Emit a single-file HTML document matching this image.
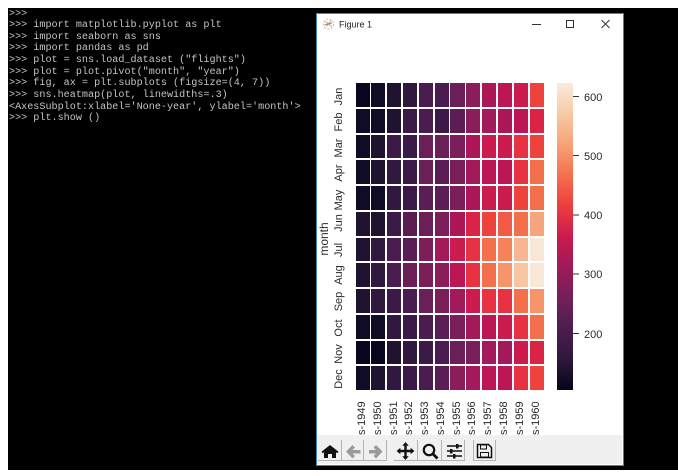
<!DOCTYPE html>
<html><head><meta charset="utf-8"><style>
html,body{margin:0;padding:0;background:#fff}
#root{position:relative;width:678px;height:476px;overflow:hidden;background:#fff;filter:blur(.3px)}
#term{position:absolute;left:8px;top:8px;width:670px;height:462px;background:#000;overflow:hidden}
pre{position:absolute;left:1px;top:.5px;margin:0;font:10.15px/11.65px "Liberation Mono",monospace;color:#c4c4c4}
#win{position:absolute;left:316px;top:13px;width:306px;height:451px;border:1px solid #3f86b8;background:#fff;overflow:hidden}
#hm{position:absolute;left:355.5px;top:83px;width:190px;height:309px;display:grid;grid-template-columns:repeat(12,1fr);grid-template-rows:repeat(12,1fr)}
#hm i{display:block;margin:0 1.7px 2px 0}
.a{background:#08061e}.b{background:#110c26}.c{background:#201332}.d{background:#30183e}.e{background:#3c1a47}.f{background:#4b1c50}.g{background:#5a1e55}.h{background:#6a1f59}.i{background:#7a1f5a}.j{background:#8a1d5a}.k{background:#a21a5a}.l{background:#ac1857}.m{background:#bd1654}.n{background:#cb1b4f}.o{background:#db2346}.p{background:#e73243}.q{background:#ee433d}.r{background:#f15a46}.s{background:#f4704c}.t{background:#f5825a}.u{background:#f6946b}.v{background:#f6a57d}.w{background:#f7b68f}.x{background:#f8c6a2}.y{background:#f9d6bb}.z{background:#f9e8d8}
#cb{position:absolute;left:557px;top:83px;width:16px;height:307px;background:linear-gradient(to top,#03051a 0%,#2e173b 10%,#4c1d50 20%,#731f5a 30%,#9e1a58 40%,#cb1b4f 50%,#ed3d3e 60%,#f4714d 70%,#f6a278 80%,#f8c9a5 90%,#faebdd 100%)}
svg{position:absolute;left:0;top:0}
text{font-family:"Liberation Sans",sans-serif;fill:#2a2a2a}
</style></head><body><div id="root">
<div id="term"><pre>&gt;&gt;&gt;
&gt;&gt;&gt; import matplotlib.pyplot as plt
&gt;&gt;&gt; import seaborn as sns
&gt;&gt;&gt; import pandas as pd
&gt;&gt;&gt; plot = sns.load_dataset ("flights")
&gt;&gt;&gt; plot = plot.pivot("month", "year")
&gt;&gt;&gt; fig, ax = plt.subplots (figsize=(4, 7))
&gt;&gt;&gt; sns.heatmap(plot, linewidths=.3)
&lt;AxesSubplot:xlabel='None-year', ylabel='month'&gt;
&gt;&gt;&gt; plt.show ()</pre></div>
<div id="win"></div>
<div id="hm">
<i class=a></i><i class=b></i><i class=c></i><i class=d></i><i class=f></i><i class=f></i><i class=h></i><i class=j></i><i class=l></i><i class=m></i><i class=n></i><i class=q></i>
<i class=b></i><i class=b></i><i class=c></i><i class=e></i><i class=f></i><i class=e></i><i class=g></i><i class=j></i><i class=k></i><i class=l></i><i class=m></i><i class=o></i>
<i class=b></i><i class=c></i><i class=e></i><i class=e></i><i class=h></i><i class=h></i><i class=i></i><i class=l></i><i class=n></i><i class=n></i><i class=p></i><i class=q></i>
<i class=b></i><i class=c></i><i class=d></i><i class=e></i><i class=h></i><i class=g></i><i class=i></i><i class=k></i><i class=m></i><i class=m></i><i class=p></i><i class=s></i>
<i class=b></i><i class=b></i><i class=d></i><i class=e></i><i class=g></i><i class=g></i><i class=i></i><i class=l></i><i class=n></i><i class=n></i><i class=q></i><i class=s></i>
<i class=c></i><i class=c></i><i class=e></i><i class=g></i><i class=h></i><i class=i></i><i class=l></i><i class=o></i><i class=q></i><i class=r></i><i class=s></i><i class=v></i>
<i class=c></i><i class=d></i><i class=f></i><i class=g></i><i class=i></i><i class=k></i><i class=n></i><i class=p></i><i class=s></i><i class=t></i><i class=w></i><i class=z></i>
<i class=c></i><i class=d></i><i class=f></i><i class=h></i><i class=i></i><i class=j></i><i class=m></i><i class=p></i><i class=s></i><i class=u></i><i class=x></i><i class=z></i>
<i class=c></i><i class=d></i><i class=e></i><i class=f></i><i class=h></i><i class=i></i><i class=k></i><i class=n></i><i class=p></i><i class=p></i><i class=s></i><i class=u></i>
<i class=b></i><i class=b></i><i class=d></i><i class=e></i><i class=f></i><i class=g></i><i class=i></i><i class=k></i><i class=m></i><i class=n></i><i class=p></i><i class=s></i>
<i class=a></i><i class=a></i><i class=c></i><i class=d></i><i class=e></i><i class=f></i><i class=h></i><i class=i></i><i class=k></i><i class=k></i><i class=n></i><i class=o></i>
<i class=b></i><i class=c></i><i class=d></i><i class=e></i><i class=f></i><i class=g></i><i class=j></i><i class=k></i><i class=m></i><i class=m></i><i class=p></i><i class=q></i>
</div>
<div id="cb"></div>
<svg width="678" height="476" viewBox="0 0 678 476">
<!-- title bar -->
<g fill="none" stroke-width="1">
<circle cx="328.500" cy="24" r="5" stroke="#b9b9c8" stroke-dasharray="2 1.500"/>
<path d="M325.500 21.500l6 5M331 20.500l-4.500 6" stroke="#c9a070"/>
<path d="M324.500 25l7.500-2" stroke="#8a8a9a"/>
</g>
<text x="339" y="27.500" font-size="9" style="fill:#222">Figure 1</text>
<path d="M532 24.500h9" stroke="#333" stroke-width="1" fill="none"/>
<rect x="566.500" y="20.500" width="7" height="7" stroke="#333" fill="none"/>
<path d="M601.500 20l8 8M609.500 20l-8 8" stroke="#333" fill="none"/>
<!-- y labels -->
<g font-size="11" text-anchor="middle">
<text transform="translate(342,96.500) rotate(-90)">Jan</text>
<text transform="translate(342,122) rotate(-90)">Feb</text>
<text transform="translate(342,148) rotate(-90)">Mar</text>
<text transform="translate(342,173) rotate(-90)">Apr</text>
<text transform="translate(342,200) rotate(-90)">May</text>
<text transform="translate(342,223) rotate(-90)">Jun</text>
<text transform="translate(342,250) rotate(-90)">Jul</text>
<text transform="translate(342,275) rotate(-90)">Aug</text>
<text transform="translate(342,301.500) rotate(-90)">Sep</text>
<text transform="translate(342,328) rotate(-90)">Oct</text>
<text transform="translate(342,354) rotate(-90)">Nov</text>
<text transform="translate(342,379) rotate(-90)">Dec</text>
</g>
<text transform="translate(328,239) rotate(-90)" font-size="12" text-anchor="middle">month</text>
<!-- x labels -->
<g font-size="11" text-anchor="start">
<text transform="translate(365,435) rotate(-90)">s-1949</text>
<text transform="translate(381,435) rotate(-90)">s-1950</text>
<text transform="translate(397,435) rotate(-90)">s-1951</text>
<text transform="translate(412,435) rotate(-90)">s-1952</text>
<text transform="translate(428,435) rotate(-90)">s-1953</text>
<text transform="translate(444,435) rotate(-90)">s-1954</text>
<text transform="translate(460,435) rotate(-90)">s-1955</text>
<text transform="translate(475,435) rotate(-90)">s-1956</text>
<text transform="translate(491,435) rotate(-90)">s-1957</text>
<text transform="translate(507,435) rotate(-90)">s-1958</text>
<text transform="translate(523,435) rotate(-90)">s-1959</text>
<text transform="translate(539,435) rotate(-90)">s-1960</text>
</g>
<!-- colorbar ticks -->
<g stroke="#333" stroke-width="1"><path d="M573 96.500h6M573 155.500h6M573 215h6M573 274h6M573 333.500h6"/></g>
<g font-size="11">
<text x="584" y="101">600</text><text x="584" y="160">500</text><text x="584" y="219">400</text><text x="584" y="278">300</text><text x="584" y="338">200</text>
</g>
<!-- toolbar -->
<rect x="317" y="435" width="305" height="29" fill="#f0f0f0"/>
<g fill="none" stroke="#b4b4b4" stroke-width="1">
<path d="M318 460.500h69M341.500 440v21M363.500 440v21M386.500 440v21"/>
<path d="M394 460.500h70M417.500 440v21M441.500 440v21M464.500 440v21"/>
<path d="M473.500 440v21M473 460.500h23M495.500 440v21"/>
</g>
<!-- home -->
<path d="M330 445l-8.500 6.800 1.200 1.400 1.300-1v5.800h4v-4h4v4h4v-5.800l1.300 1 1.200-1.400z" fill="#111"/>
<!-- back -->
<path d="M346 451.500l6.500-6.500 2.500 2.500-2.500 2.500h8v3.500h-8l2.500 2.500-2.500 2.500z" fill="#9a9a9a"/>
<!-- forward -->
<path d="M382.500 451.500l-6.500-6.500-2.500 2.500 2.500 2.500h-7v3.500h7l-2.500 2.500 2.500 2.500z" fill="#9a9a9a"/>
<!-- move -->
<path d="M405.500 442l3.200 3.800h-2v3.900h3.900v-2l3.800 3.300-3.800 3.300v-2h-3.900v3.900h2l-3.200 3.800-3.200-3.800h2v-3.900h-3.900v2l-3.800-3.300 3.800-3.300v2h3.900v-3.900h-2z" fill="#111"/>
<!-- zoom -->
<circle cx="429" cy="450" r="5.200" fill="none" stroke="#111" stroke-width="2.200"/>
<path d="M433 454l4.500 4.500" stroke="#111" stroke-width="2.800" fill="none"/>
<!-- sliders -->
<g stroke="#111" stroke-width="1.500" fill="none"><path d="M447 446h15M447 451h15M447 456h15"/></g>
<g fill="#111"><rect x="456" y="444" width="2.500" height="4.500"/><rect x="450" y="449" width="2.500" height="4.500"/><rect x="453" y="454" width="2.500" height="4.500"/></g>
<!-- save -->
<path d="M477.500 444.500h11l3 3v10h-14z" fill="none" stroke="#111" stroke-width="1.500"/>
<rect x="480.500" y="445" width="6" height="4" fill="none" stroke="#111"/>
<rect x="480.500" y="452.500" width="8" height="4.500" fill="none" stroke="#111"/>
</svg>
</div></body></html>
